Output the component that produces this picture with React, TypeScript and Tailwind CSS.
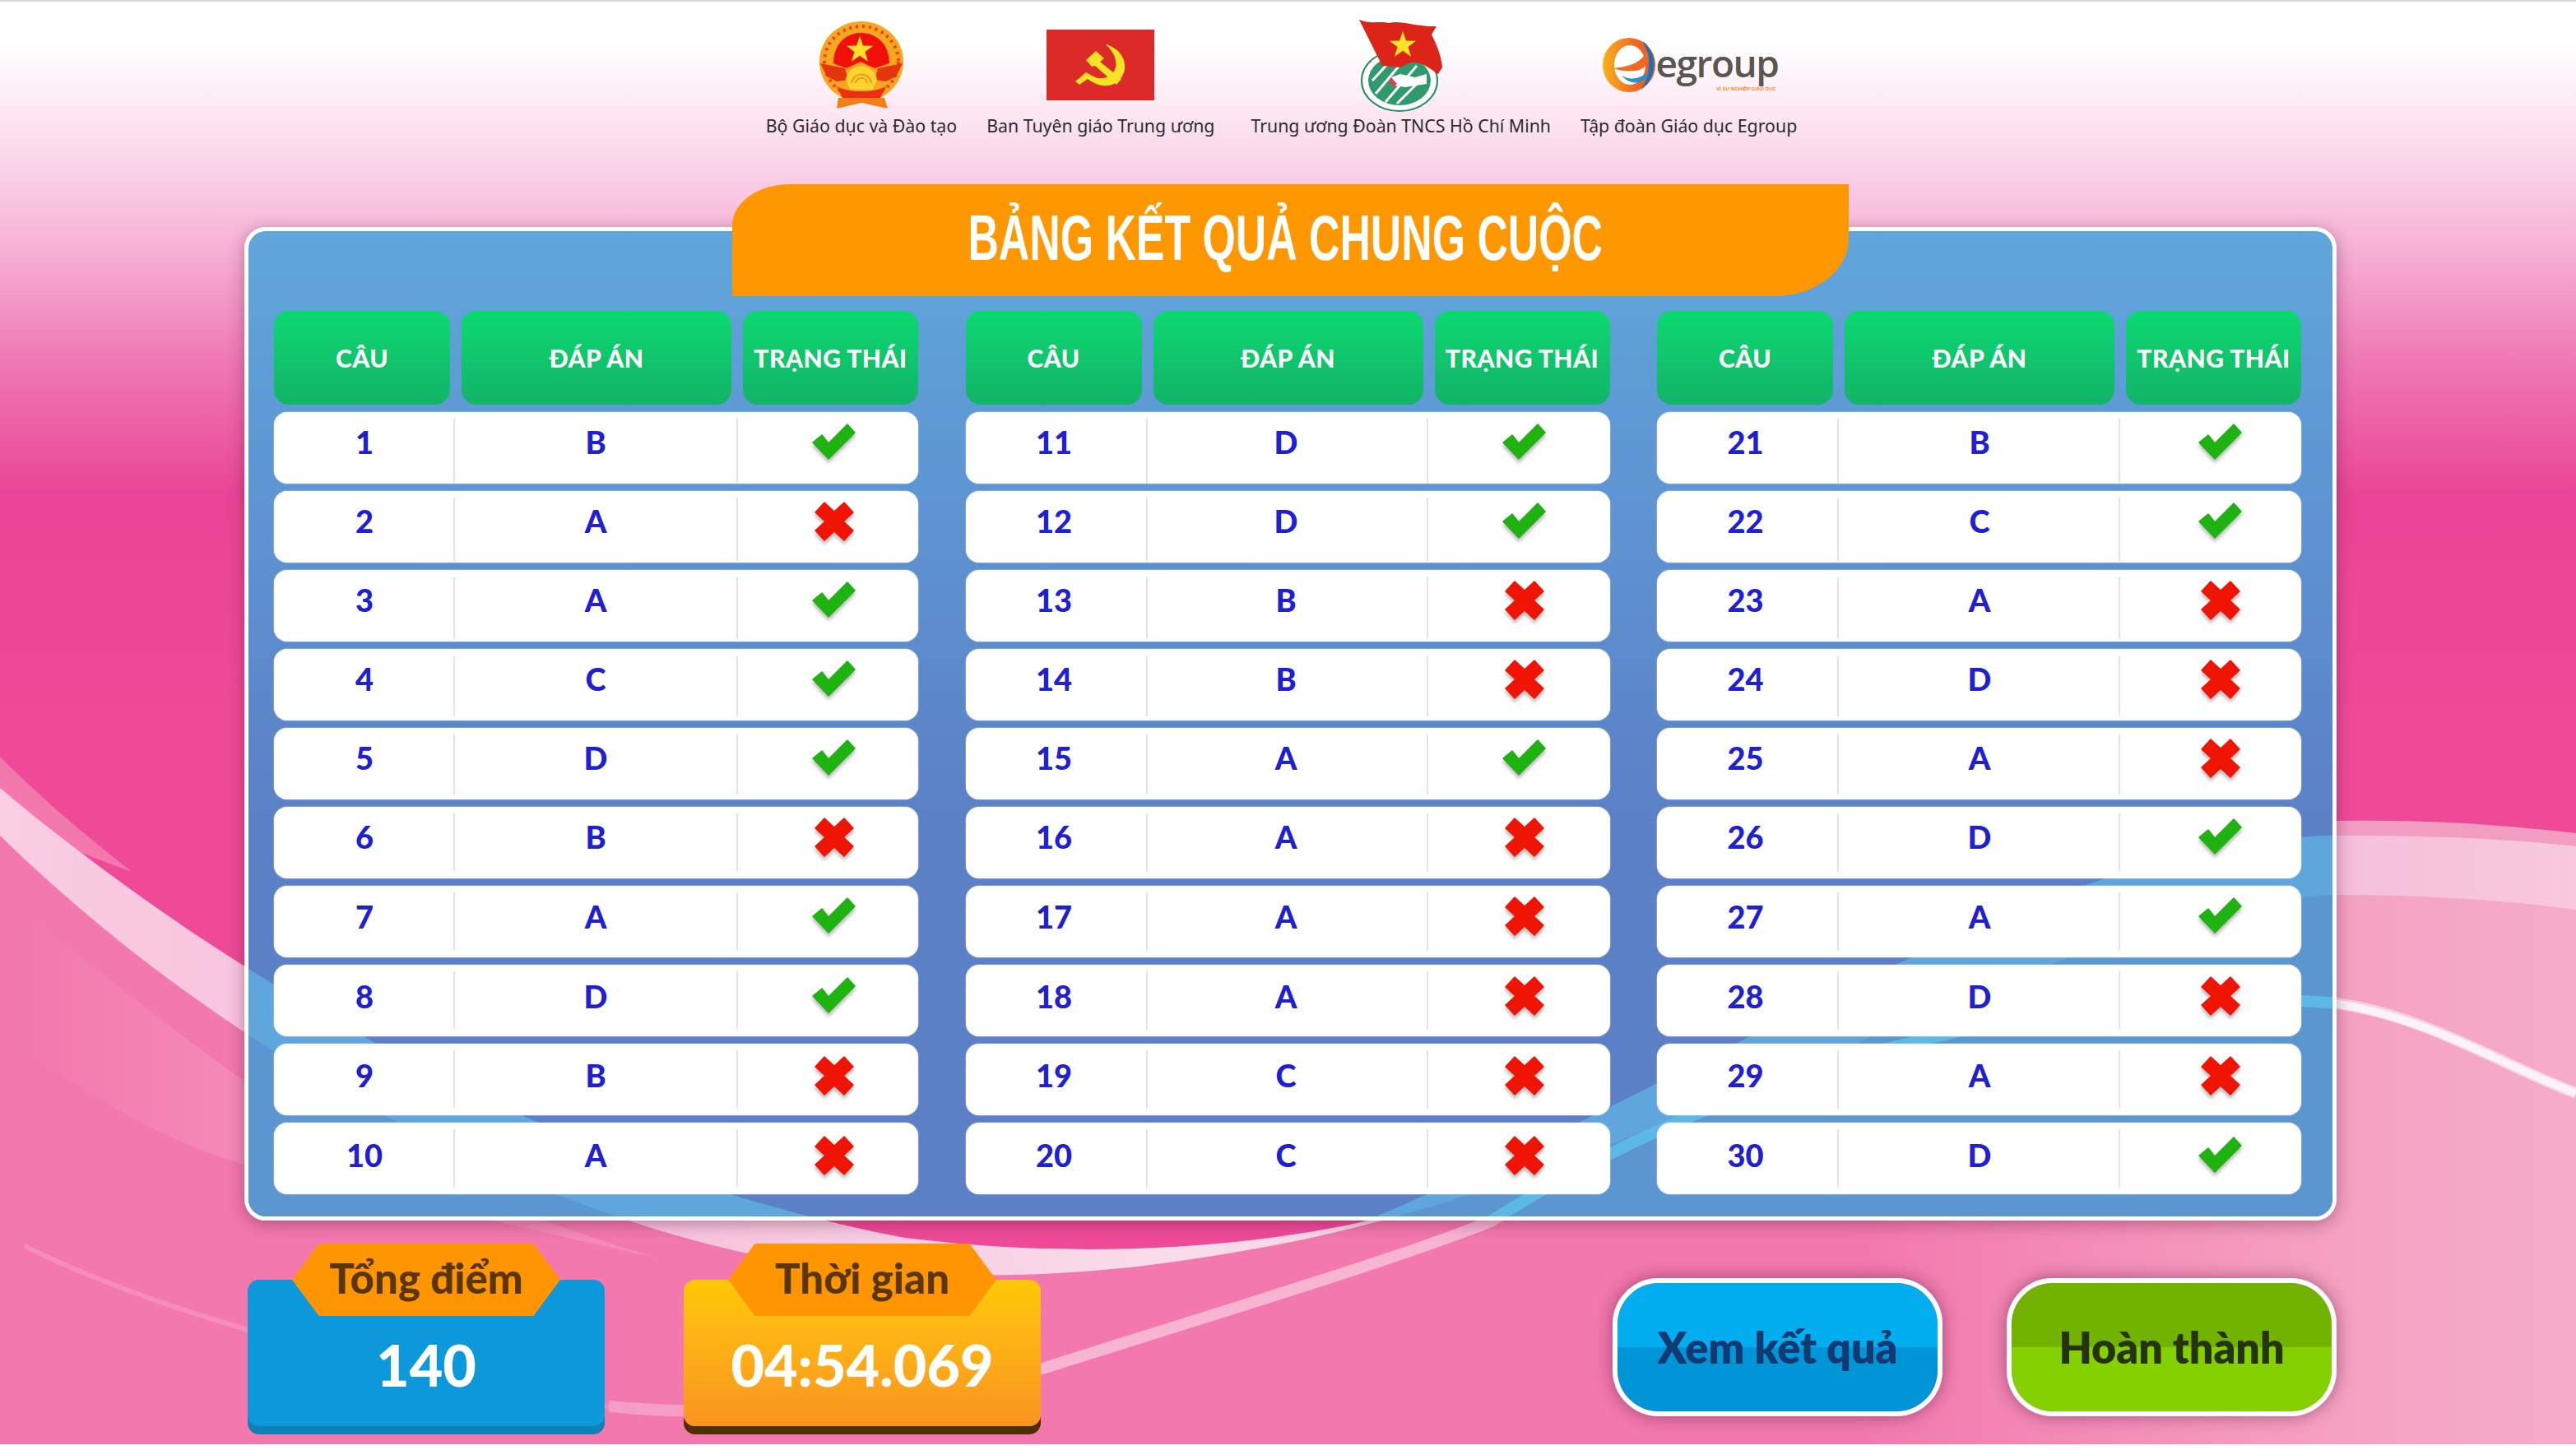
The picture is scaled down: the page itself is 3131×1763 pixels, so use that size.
const rows: [number, string, boolean][][] = [
  [[1, 'B', true], [2, 'A', false], [3, 'A', true], [4, 'C', true], [5, 'D', true], [6, 'B', false], [7, 'A', true], [8, 'D', true], [9, 'B', false], [10, 'A', false]],
  [[11, 'D', true], [12, 'D', true], [13, 'B', false], [14, 'B', false], [15, 'A', true], [16, 'A', false], [17, 'A', false], [18, 'A', false], [19, 'C', false], [20, 'C', false]],
  [[21, 'B', true], [22, 'C', true], [23, 'A', false], [24, 'D', false], [25, 'A', false], [26, 'D', true], [27, 'A', true], [28, 'D', false], [29, 'A', false], [30, 'D', true]],
];

// wave shapes, in page coordinates
const LOW = 'M0 958C300 1210 700 1430 1100 1505C1300 1530 1500 1520 1659 1485C2100 1300 2500 1016 2840 1016C2960 1016 3050 1020 3131 1029V1763H0Z';
const BAND = 'M0 958C300 1210 700 1430 1100 1505C1300 1530 1500 1520 1659 1485C2100 1300 2500 1016 2840 1016C2960 1016 3050 1020 3131 1029V1106C3050 1095 2950 1088 2840 1088C2500 1100 2000 1440 1516 1520C1350 1550 1200 1560 1000 1540C700 1500 300 1310 0 1016Z';
const LINE = 'M1264 1665C1500 1590 1700 1530 1812 1485C2100 1300 2500 1190 2840 1220C2950 1235 3040 1295 3131 1329';

function Star({ cx, cy, r, fill }: { cx: number; cy: number; r: number; fill: string }) {
  const pts = Array.from({ length: 10 }, (_, i) => {
    const a = -Math.PI / 2 + (i * Math.PI) / 5;
    const rr = i % 2 ? r * 0.4 : r;
    return `${cx + rr * Math.cos(a)},${cy + rr * Math.sin(a)}`;
  }).join(' ');
  return <polygon points={pts} fill={fill} />;
}

function Emblem() {
  return (
    <svg width="104" height="108" viewBox="0 0 104 108">
      <ellipse cx="52" cy="50" rx="51" ry="49" fill="#f8a51f" />
      <ellipse cx="52" cy="50" rx="45" ry="43" fill="none" stroke="#e8430f" strokeWidth="4" strokeDasharray="3 5" />
      <path d="M18 52C18 30 32 15 51 15C72 15 86 30 86 52L68 58L51 50L34 58Z" fill="#f10f0a" />
      <path d="M2 52L32 58L36 72L22 74L10 68Z M102 52L72 58L68 72L82 74L94 68Z" fill="#e6340e" />
      <path d="M33 72C36 50 68 50 71 72L66 84H38Z" fill="#fbd32e" />
      <path d="M40 76C42 62 62 62 64 76M45 76C46 68 58 68 59 76" fill="none" stroke="#ef9a1a" strokeWidth="2" />
      <path d="M22 80C36 88 68 88 82 80L74 96H30Z" fill="#ea3010" />
      <path d="M24 94H80L84 107L52 100L22 107Z" fill="#f57f17" />
      <Star cx={50} cy={36} r={17} fill="#fde02c" />
    </svg>
  );
}

function PartyFlag() {
  return (
    <svg width="131" height="86" viewBox="0 0 131 86">
      <rect width="131" height="86" fill="#dc2a28" />
      <path d="M72 18C88 22 97 36 95 48C93 62 80 70 68 68C60 67 54 63 50 60L40 67L35 63L48 52C54 55 60 60 68 59C80 58 86 48 84 38C83 30 78 24 72 18Z" fill="#f6e225" />
      <path d="M48 37L60 26L70 35L65 39L91 60L85 67L59 44L55 45Z" fill="#f6e225" />
    </svg>
  );
}

function Youth() {
  return (
    <svg width="102" height="114" viewBox="0 0 102 114">
      <ellipse cx="49" cy="76" rx="46" ry="37" fill="#fff" stroke="#2a8a60" strokeWidth="2" />
      <ellipse cx="49" cy="76" rx="38" ry="30" fill="#2f9a6e" />
      <path d="M20 92L52 54M32 102L70 58M16 76L38 52M46 104L80 70" stroke="#fff" strokeWidth="3" />
      <path d="M0 2C14 8 24 3 36 6C50 2 64 10 94 10L88 20C96 36 100 48 101 60L96 68C84 60 72 50 60 55L50 60L28 58Z" fill="#dd2419" />
      <Star cx={53} cy={33} r={17} fill="#fde325" />
      <path d="M39 72L50 68L68 72L82 68L82 80L56 84L42 82Z" fill="#fff" />
      <path d="M39 72L46 80L42 84L36 78Z" fill="#d8434f" />
    </svg>
  );
}

function Egroup() {
  return (
    <div className="relative flex items-center h-[72px] w-[212px]">
      <svg width="68" height="68" viewBox="0 0 68 68" className="shrink-0">
        <defs>
          <linearGradient id="eg" x1="0" y1="0" x2="1" y2="0">
            <stop offset="0" stopColor="#f9b21b" />
            <stop offset="0.6" stopColor="#ef6a23" />
            <stop offset="1" stopColor="#e8531f" />
          </linearGradient>
        </defs>
        <ellipse cx="33" cy="34" rx="32" ry="33" fill="url(#eg)" />
        <ellipse cx="34" cy="34" rx="19" ry="24" fill="#fff" />
        <path d="M14 38C30 36 48 34 56 14C62 24 56 40 40 41C30 42 22 41 14 38Z" fill="#ef6a23" />
        <path d="M50 5C68 20 68 48 48 64C56 50 59 36 56 20Z" fill="#1f6fb5" />
        <path d="M24 47C34 53 46 51 58 42C52 58 36 60 24 47Z" fill="#2f8ed0" />
      </svg>
      <span className="font-['Open_Sans',sans-serif] font-semibold text-[46px] leading-none text-[#5a5650] -ml-[2px] tracking-[-1.5px] pb-[6px]">egroup</span>
      <span className="absolute right-0 bottom-[2px] font-['Liberation_Sans',sans-serif] text-[6px] font-bold text-[#f08a24] whitespace-nowrap">VÌ SỰ NGHIỆP GIÁO DỤC</span>
    </div>
  );
}

function Check() {
  return (
    <svg width="54" height="46" viewBox="-1 -1 54 46" className="drop-shadow-[0_4px_2px_rgba(0,0,0,0.28)]">
      <path d="M0 22L11 13L19 23L42 0L51 10L19 42Z" fill="#1fb312" strokeLinejoin="round" stroke="#1fb312" strokeWidth="1.5" />
    </svg>
  );
}

function Cross() {
  return (
    <svg width="48" height="48" viewBox="-1 -1 48 48" className="drop-shadow-[0_4px_2px_rgba(0,0,0,0.28)]">
      <path d="M0 12L11 0L23 11L35 0L46 12L34 23L46 34L35 46L23 35L11 46L0 34L12 23Z" fill="#f01405" strokeLinejoin="round" stroke="#f01405" strokeWidth="1.5" />
    </svg>
  );
}

type TableProps = { data: [number, string, boolean][]; widths: string; numCell: string; ansCell: string; iconCell: string };

function ResultTable({ data, widths, numCell, ansCell, iconCell }: TableProps) {
  return (
    <div className="w-[783px] flex flex-col gap-[9px]">
      <div className="grid grid-cols-[214px_328px_213px] gap-x-[14px] h-[114px] text-white font-['Lato',sans-serif] font-black text-[30px] tracking-[0.5px]">
        {['CÂU', 'ĐÁP ÁN', 'TRẠNG THÁI'].map((h) => (
          <div key={h} className="rounded-[18px] bg-gradient-to-b from-[#0bd970] to-[#12b368] flex items-center justify-center whitespace-nowrap">
            {h}
          </div>
        ))}
      </div>
      {data.map(([n, a, ok], i) => {
        // text sits a little higher in the first rows than in the last ones
        const lift = { paddingBottom: 22 - i * 1.6 };
        return (
          <div key={n} className={`grid ${widths} h-[87px] bg-white rounded-[16px] text-[#2020d0] font-['Lato',sans-serif] font-black text-[38px] shadow-[0_0_2px_rgba(255,255,255,0.7)]`}>
            <div style={lift} className={`flex items-center justify-center my-[8px] ${numCell}`}>{n}</div>
            <div style={lift} className={`flex items-center justify-center my-[8px] border-x-2 border-[#e4e4e4] ${ansCell}`}>{a}</div>
            <div style={lift} className={`flex items-center justify-center my-[8px] ${iconCell}`}>{ok ? <Check /> : <Cross />}</div>
          </div>
        );
      })}
    </div>
  );
}

function StatCard({ title, value, body }: { title: string; value: string; body: string }) {
  return (
    <div className="relative w-[434px] h-[222px] flex flex-col justify-end">
      <div className={`h-[178px] rounded-[14px] flex items-center justify-center pt-[28px] text-white font-['Lato',sans-serif] font-black text-[70px] leading-none ${body}`}>
        {value}
      </div>
      <div className="absolute left-[54px] top-0 w-[326px] h-[88px] bg-[#ff9500] [clip-path:polygon(10%_0,90%_0,100%_50%,90%_100%,10%_100%,0_50%)] flex items-center justify-center pb-[4px] font-['Lato',sans-serif] font-black text-[51px] text-[#5a3608]">
        {title}
      </div>
    </div>
  );
}

function ActionButton({ label, top, bottom, text }: { label: string; top: string; bottom: string; text: string }) {
  return (
    <button className={`w-[401px] h-[168px] rounded-[56px] border-[6px] border-white shadow-[0_0_20px_rgba(90,20,60,0.5)] overflow-hidden flex flex-col relative ${text}`}>
      <div className={`h-1/2 w-full ${top}`} />
      <div className={`h-1/2 w-full ${bottom}`} />
      <span className="absolute inset-0 flex items-center justify-center font-['Lato',sans-serif] font-extrabold text-[52px]">{label}</span>
    </button>
  );
}

function Background() {
  return (
    <svg className="absolute inset-0" width="3131" height="1763" viewBox="0 0 3131 1763">
      <defs>
        <linearGradient id="sky" x1="0" y1="0" x2="0" y2="1">
          <stop offset="0" stopColor="#ffffff" />
          <stop offset="0.03" stopColor="#ffffff" />
          <stop offset="0.08" stopColor="#fde6f2" />
          <stop offset="0.12" stopColor="#fad0e6" />
          <stop offset="0.17" stopColor="#f6b2d5" />
          <stop offset="0.25" stopColor="#ef78b4" />
          <stop offset="0.34" stopColor="#ea4596" />
          <stop offset="0.5" stopColor="#ef4a98" />
          <stop offset="1" stopColor="#ef4a98" />
        </linearGradient>
        <linearGradient id="low" gradientUnits="userSpaceOnUse" x1="0" y1="0" x2="3131" y2="0">
          <stop offset="0" stopColor="#f278ad" />
          <stop offset="0.72" stopColor="#f278ad" />
          <stop offset="0.9" stopColor="#f5a0c1" />
          <stop offset="1" stopColor="#f5acca" />
        </linearGradient>
        <linearGradient id="band" gradientUnits="userSpaceOnUse" x1="0" y1="0" x2="3131" y2="0">
          <stop offset="0" stopColor="#f9cde2" />
          <stop offset="0.2" stopColor="#f6bcd8" />
          <stop offset="0.45" stopColor="#f9dcea" />
          <stop offset="0.9" stopColor="#f6bfd9" />
          <stop offset="1" stopColor="#f7c8de" />
        </linearGradient>
        <linearGradient id="soft" gradientUnits="userSpaceOnUse" x1="20" y1="0" x2="295" y2="0">
          <stop offset="0" stopColor="#f278ad" />
          <stop offset="1" stopColor="#f48ab5" />
        </linearGradient>
      </defs>
      <rect width="3131" height="1763" fill="url(#sky)" />
      <path d="M0 920C60 980 110 1020 160 1060L0 1000Z" fill="#f278ad" />
      <path d="M2840 998C2960 996 3050 1004 3131 1013V1040H2840Z" fill="#f49dc3" />
      <path d={LOW} fill="url(#low)" />
      <path d="M20 1103C120 1180 220 1260 295 1313C450 1400 600 1470 800 1530L295 1415C200 1390 90 1320 20 1270Z" fill="url(#soft)" />
      <path d={BAND} fill="url(#band)" />
      <path d="M30 1515C200 1600 500 1680 740 1710" fill="none" stroke="#fff" strokeOpacity="0.16" strokeWidth="6" />
      <path d="M740 1710C900 1725 1100 1710 1264 1665" fill="none" stroke="#fff" strokeOpacity="0.28" strokeWidth="14" />
      <path d={LINE} fill="none" stroke="#fff" strokeOpacity="0.45" strokeWidth="14" />
      <path d="M2830 1219C2950 1235 3040 1295 3131 1329" fill="none" stroke="#fdf2f7" strokeWidth="10" />
      <rect width="3131" height="2" fill="#d9d9d9" />
      <rect y="1756" width="3131" height="7" fill="#fff" />
    </svg>
  );
}

// the same waves seen through the blue panel
function PanelWaves() {
  return (
    <div className="absolute inset-0 rounded-[21px] overflow-hidden">
      <svg width="2533" height="1198" viewBox="302 281 2533 1198">
        <path d={LOW} fill="#5c96d0" />
        <path d={BAND} fill="#5fa6dc" />
        <path d={LINE} fill="none" stroke="#5cb9e6" strokeWidth="14" />
      </svg>
    </div>
  );
}

export default function App() {
  return (
    <div className="relative w-[3131px] h-[1763px] overflow-hidden">
      <Background />
      <div className="relative flex flex-col h-full pl-[297px] pr-[291px]">
        <header className="h-[176px] flex justify-center gap-[36px] pt-[23px] ml-[-22px]">
          {[
            { label: 'Bộ Giáo dục và Đào tạo', logo: <Emblem /> },
            { label: 'Ban Tuyên giáo Trung ương', logo: <PartyFlag /> },
            { label: 'Trung ương Đoàn TNCS Hồ Chí Minh', logo: <Youth /> },
            { label: 'Tập đoàn Giáo dục Egroup', logo: <Egroup /> },
          ].map(({ label, logo }, i) => (
            <div key={label} className={`flex flex-col items-center ${i === 2 ? 'ml-[8px]' : ''}`}>
              <div className="h-[112px] flex items-center justify-center">{logo}</div>
              <div className="mt-[3px] whitespace-nowrap font-['Noto_Sans',sans-serif] text-[21.3px] leading-[30px] text-[#2b2b2b]">{label}</div>
            </div>
          ))}
        </header>

        <main className="relative mt-[100px] h-[1208px] rounded-[26px] border-[5px] border-white shadow-[0_4px_20px_rgba(90,20,60,0.4)] bg-gradient-to-b from-[#5fa6dc] to-[#5b80c5] to-60%">
          <PanelWaves />
          <div className="absolute left-[588px] top-[-57px] w-[1357px] h-[136px] pr-[12px] pb-[6px] bg-[#ff9800] rounded-tl-[70px_50px] rounded-br-[90px_70px] flex items-center justify-center font-['Liberation_Sans',sans-serif] font-bold text-white">
            <span className="inline-block text-[77px] leading-none whitespace-nowrap scale-x-[0.673]">BẢNG KẾT QUẢ CHUNG CUỘC</span>
          </div>
          <div className="relative flex justify-between pl-[31px] pr-[38px] pt-[97px]">
            <ResultTable data={rows[0]} widths="grid-cols-[218px_346px_219px]" numCell="pl-[2px]" ansCell="" iconCell="pl-[14px]" />
            <ResultTable data={rows[1]} widths="grid-cols-[219px_343px_221px]" numCell="pr-[4px]" ansCell="pr-[2px]" iconCell="pl-[14px]" />
            <ResultTable data={rows[2]} widths="grid-cols-[219px_344px_220px]" numCell="pr-[4px]" ansCell="pl-[2px]" iconCell="pl-[24px]" />
          </div>
        </main>

        <footer className="flex items-start mt-[28px]">
          <div className="flex gap-[96px] ml-[4px]">
            <StatCard title="Tổng điểm" value="140" body="bg-[#0e98dc] shadow-[0_10px_0_#1080b8]" />
            <StatCard title="Thời gian" value="04:54.069" body="bg-gradient-to-b from-[#ffc805] to-[#f9941f] shadow-[0_10px_0_#4f2f00]" />
          </div>
          <div className="ml-auto flex gap-[78px] mt-[42px]">
            <ActionButton label="Xem kết quả" top="bg-[#02adf0]" bottom="bg-[#0095d6]" text="text-[#123a72]" />
            <ActionButton label="Hoàn thành" top="bg-[#72b300]" bottom="bg-[#84d000]" text="text-[#25340a]" />
          </div>
        </footer>
      </div>
    </div>
  );
}
